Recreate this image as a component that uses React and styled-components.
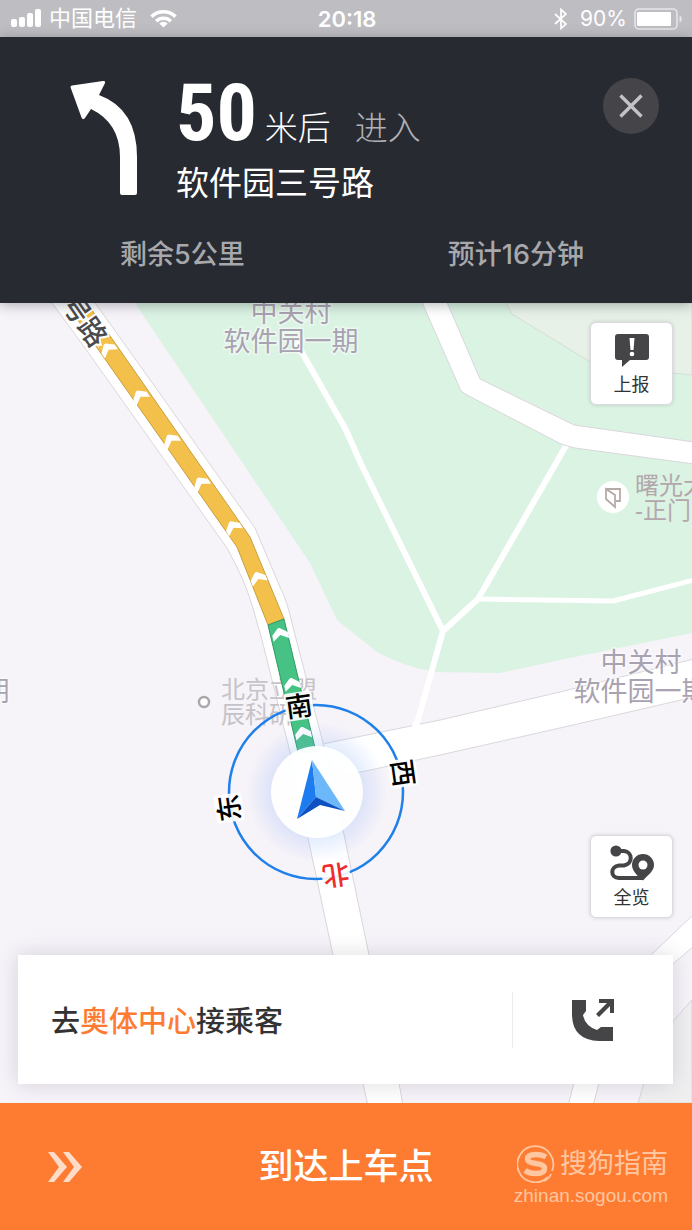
import React from 'react';
import styled, { createGlobalStyle } from 'styled-components';

const GlobalStyle = createGlobalStyle`
    * {
        box-sizing: border-box;
    }

    body {
        margin: 0;
        font-family: "Liberation Sans", "Noto Sans CJK SC", sans-serif;
    }

    button {
        border: none;
        padding: 0;
        font-family: inherit;
        cursor: pointer;
    }
`;

const areaLabels = [
    { x: 291, y: 322, text: '中关村' },
    { x: 291, y: 351, text: '软件园一期' },
    { x: 641, y: 672, text: '中关村' },
    { x: 641, y: 701, text: '软件园一期' },
    { x: -58, y: 701, text: '软件园一期' },
];

const chevrons = [
    [108, 349, -35],
    [140, 396, -33],
    [171, 440, -33],
    [201, 483, -33],
    [233, 527, -30],
    [258, 578, -22],
    [280, 634, -14],
    [292, 684, -14],
    [303, 733, -12],
];

const directions = [
    { text: '南', x: 299, y: 706, angle: -8 },
    { text: '西', x: 403, y: 773, angle: 82 },
    { text: '北', x: 336, y: 875, angle: 172, red: true },
    { text: '东', x: 229, y: 808, angle: -98 },
];

const StatusBar = () => (
    <Status>
        <StatusSide>
            <svg width="31" height="19" viewBox="0 0 31 19" fill="#fff">
                <rect x="0" y="10" width="6" height="8" rx="2" />
                <rect x="8" y="8" width="6" height="10" rx="2" />
                <rect x="16" y="4" width="6" height="14" rx="2" />
                <rect x="24" y="0" width="6" height="18" rx="2" />
            </svg>
            <Carrier>中国电信</Carrier>
            <svg width="27" height="19" viewBox="0 0 27 19" fill="none" stroke="#fff" strokeWidth="3.6">
                <path d="M1.5 7.6a17.2 17.2 0 0 1 24 0" />
                <path d="M6.2 12.2a10.5 10.5 0 0 1 14.6 0" />
                <path d="M13.5 18.5l-4.2-4.1a6 6 0 0 1 8.4 0z" fill="#fff" stroke="none" />
            </svg>
        </StatusSide>
        <Clock>20:18</Clock>
        <StatusSide $end>
            <svg width="14" height="22" viewBox="0 0 14 22" fill="none" stroke="#fff" strokeWidth="1.7">
                <path d="M1 6l11 10-5 4.5v-19L12 6 1 16" />
            </svg>
            <Percent>90%</Percent>
            <svg width="49" height="22" viewBox="0 0 49 22">
                <rect x="1" y="1" width="42" height="20" rx="4" fill="none" stroke="#e6e5e8" strokeWidth="1.6" />
                <rect x="3" y="4" width="34" height="14" rx="1" fill="#fff" />
                <path d="M45.5 7.5c3 1 3 6 0 7z" fill="#e6e5e8" />
            </svg>
        </StatusSide>
    </Status>
)

const GuidePanel = () => (
    <Guide>
        <Turn>
            <TurnIcon viewBox="0 0 70 118" aria-hidden="true">
                <path d="M2 4.5L33 0q3-.2 1.8 2.6L29 14Q67 28 67 76v36q0 2-2 2H52q-2 0-2-2V76Q50 42 21 28l-6 9q-2 2.5-3.5-.5L.8 7Q0 5 2 4.5z" fill="#fff" />
            </TurnIcon>
            <TurnText>
                <Distance>
                    <strong>50</strong>
                    <span>米后</span>
                    <em>进入</em>
                </Distance>
                <Road>软件园三号路</Road>
            </TurnText>
            <Close aria-label="关闭">
                <svg width="24" height="24" viewBox="0 0 24 24" stroke="#c3c3c6" strokeWidth="3.4">
                    <path d="M1.5 1.5l21 21M22.5 1.5l-21 21" />
                </svg>
            </Close>
        </Turn>
        <Trip>
            <span>剩余5公里</span>
            <span>预计16分钟</span>
        </Trip>
    </Guide>
)

const RoadMap = () => (
    <MapSvg viewBox="0 303 692 800" preserveAspectRatio="xMidYMid slice">
        <defs>
            <radialGradient id="halo">
                <stop offset="0.6" stopColor="#7fa8f5" stopOpacity="0.24" />
                <stop offset="1" stopColor="#7fa8f5" stopOpacity="0" />
            </radialGradient>
        </defs>
        <rect x="-700" y="-300" width="2100" height="2000" fill="#f6f3f9" />

        {/* parks and blocks */}
        <path d="M135 303L153 330 310 563 337 620 377 652Q400 665 434 672L500 673 560 660 692 633V303z" fill="#daf3e3" />
        <path d="M506 303l6 11 80 49 80 10 20 2v-72z" fill="#e7f1e8" stroke="#d6ddd6" />
        <path d="M692 1000l-18 20-19 35-11 28-6 20h54z" fill="#efeff0" stroke="#d8d6db" />

        {/* footpaths */}
        <g fill="none" stroke="#fff" strokeWidth="6" strokeLinejoin="round">
            <path d="M296 342L346 430 361 464 443 631" />
            <path d="M567 444L478 599 443 631 416 727" />
            <path d="M478 599L613 601 694 580" strokeWidth="5" />
        </g>

        {/* streets */}
        <g fill="#fff" stroke="#d9d7dc">
            <path d="M421 300L461 391 467 395 561 444 575 448 694 464V442L574 425 480 379 446 300z" />
            <path d="M694 914L651 955 604 1010 574 1083 568 1106H593L599 1083 634 1005 674 963 694 946z" />
            <path d="M318 745L440 720 560 692 694 659V697L560 728 440 755 356 773z" />
            <path d="M50 300L90 355 227 548Q245 580 253 608L262 640 290 752 308 838 333 955 363 1083 368 1106H403L399 1083 369 955 343 830 323 743 293 627Q287 600 280 587L255 528 163 398 93 300z" />
        </g>
        <path d="M326 746l60-13 0 33-40 8-14-10zM413 722l7-1 0 6-8 0z" fill="#fff" />

        {/* place names under the route */}
        <g fill="#c6c3c8" fontSize="24">
            <text x="221" y="698">北京立盟</text>
            <text x="221" y="723">辰科研</text>
        </g>
        <circle cx="204" cy="702" r="5" fill="#fff" stroke="#aaa7ac" strokeWidth="2.5" />

        {/* route */}
        <path d="M64 300L100 352 237 547 268 625 284 619 250 537 115 343 85 300z" fill="#f3c14b" stroke="#c79e42" />
        <path d="M268 625L298 752H316L284 619z" fill="#45c284" stroke="#329a65" />
        {chevrons.map(([x, y, angle]) => (
            <path
                key={y}
                d="M-8 6V0L-1-6H1L8 0V6L0 1z"
                transform={`translate(${x} ${y}) rotate(${angle})`}
                fill="#fff"
            />
        ))}

        <StreetName transform="translate(70 300) rotate(55)" x="-31" y="10">三号路</StreetName>

        {areaLabels.map((label) => (
            <AreaName key={`${label.x}-${label.y}`} x={label.x} y={label.y}>{label.text}</AreaName>
        ))}

        {/* gate */}
        <circle cx="613" cy="497" r="16" fill="#fff" />
        <path d="M606 489h14v12h-4M606 489v10l9 8v-12z" fill="none" stroke="#b5aaa6" strokeWidth="1.8" />
        <g fill="#b3a7ad" fontSize="24">
            <text x="635" y="494">曙光大厦</text>
            <text x="635" y="519">-正门</text>
        </g>

        {/* compass */}
        <circle cx="317" cy="792" r="70" fill="url(#halo)" />
        <circle cx="316" cy="792" r="87" fill="none" stroke="#2080ea" strokeWidth="2.5" />
        <circle cx="317" cy="792" r="46" fill="#fff" fillOpacity="0.96" />
        <path d="M312 760L297 819 316 797z" fill="#1c7cf0" />
        <path d="M312 760L316 797 345 811z" fill="#6cb8fa" />
        <path d="M316 797L297 819 320 805 345 811z" fill="#0c50c2" />
        {directions.map((dir) => (
            <g key={dir.text} transform={`translate(${dir.x} ${dir.y}) rotate(${dir.angle})`}>
                <rect x="-14" y="-14" width="28" height="28" rx="3" fill="#fff" fillOpacity="0.9" />
                <DirectionName y="10" $red={dir.red}>{dir.text}</DirectionName>
            </g>
        ))}
    </MapSvg>
)

const App = () => {
    return (
        <Page>
            <GlobalStyle />
            <StatusBar />
            <GuidePanel />
            <MapArea>
                <RoadMap />
                <MapTools>
                    <MapButton>
                        <svg width="34" height="34" viewBox="0 0 34 34">
                            <path d="M3 0h28q3 0 3 3v20q0 3-3 3H15l-8 7v-7H3q-3 0-3-3V3q0-3 3-3z" fill="#454547" />
                            <path d="M14.5 4h5l-1 12h-3z" fill="#fff" />
                            <circle cx="17" cy="20" r="2.3" fill="#fff" />
                        </svg>
                        上报
                    </MapButton>
                    <MapButton>
                        <svg width="44" height="36" viewBox="0 0 44 36">
                            <circle cx="6" cy="6" r="5.6" fill="#454547" />
                            <path d="M6 6h8c9 1 9 13 0 14.5H9c-9 1-9 12 0 12.5h24" fill="none" stroke="#454547" strokeWidth="4" />
                            <path d="M33 9a11 11 0 0 1 11 11c0 6-6 10-11 15.500-5-4-11-9.500-11-15.500a11 11 0 0 1 11-11z" fill="#454547" />
                            <circle cx="33" cy="20" r="4.5" fill="#fff" />
                        </svg>
                        全览
                    </MapButton>
                </MapTools>
                <TaskCard>
                    <p>去<b>奥体中心</b>接乘客</p>
                    <Call aria-label="拨打电话">
                        <svg width="42" height="42" viewBox="0 0 42 42" fill="#454547">
                            <path d="M0 1h14v11l-3 4q2 11 14 15l4-3h12v14H27Q0 41 0 15z" />
                            <path d="M27 0h15v14h-4V7L27 18l-3-3L35 4h-8z" />
                        </svg>
                    </Call>
                </TaskCard>
            </MapArea>
            <Arrive>
                <svg width="34" height="30" viewBox="0 0 34 30" fill="#ffdcc8">
                    <path d="M0 0h6l13 15L6 30H0l11-15zM15 0h6l13 15-13 15h-6l11-15z" />
                </svg>
                <ArriveTitle>到达上车点</ArriveTitle>
                <Brand>
                    <BrandName>
                        <svg width="38" height="38" viewBox="0 0 38 38" fill="none" stroke="#ffc6a0">
                            <path d="M31 32a18 18 0 1 1 4-6" strokeWidth="1.8" />
                            <path d="M27 36q5-2 7-7" strokeWidth="1.8" />
                            <path d="M29 12q-4-2.5-10-2.5-8.500 0-8.500 4.500 0 3.500 8.500 4.500t8.500 5q0 5-8.500 5-7 0-11-3" strokeWidth="5.5" />
                        </svg>
                        搜狗指南
                    </BrandName>
                    <small>zhinan.sogou.com</small>
                </Brand>
            </Arrive>
        </Page>
    )
}

const Page = styled.div`
    display: flex;
    flex-direction: column;
    min-height: 100vh;
`;

const Status = styled.header`
    display: grid;
    grid-template-columns: 1fr auto 1fr;
    align-items: center;
    height: 37px;
    padding: 0 9px 0 11px;
    background-color: #bebdc2;
    color: #fff;
`;

const StatusSide = styled.div`
    display: flex;
    align-items: center;
    justify-content: ${(props) => (props.$end ? 'flex-end' : 'flex-start')};
    gap: 7px;
`;

const Carrier = styled.span`
    margin-right: 6px;
    font-size: 22px;
    line-height: 36px;
`;

const Clock = styled.time`
    font-family: Inter, sans-serif;
    font-size: 22px;
    font-weight: 600;
`;

const Percent = styled.span`
    margin-left: 5px;
    font-family: Inter, sans-serif;
    font-size: 21px;
`;

const Guide = styled.section`
    z-index: 1;
    display: flex;
    flex-direction: column;
    justify-content: space-between;
    height: 266px;
    padding: 41px 33px 28px 70px;
    background-color: #282a32;
    box-shadow: 0 2px 12px rgba(40, 42, 50, 0.35);
    color: #fff;
`;

const Turn = styled.div`
    display: flex;
    align-items: flex-start;
`;

const TurnIcon = styled.svg`
    width: 70px;
    height: 118px;
    margin-top: 3px;
`;

const TurnText = styled.div`
    flex: 1;
    margin-left: 36px;
`;

const Distance = styled.p`
    display: flex;
    align-items: baseline;
    margin: 0;
    font-size: 33px;
    font-weight: 300;
    line-height: 70px;

    strong {
        margin-right: 8px;
        font-family: "Roboto Condensed", Roboto, sans-serif;
        font-size: 80px;
        font-weight: 700;
    }

    em {
        margin-left: 24px;
        color: #b0b1b5;
        font-style: normal;
    }
`;

const Road = styled.p`
    margin: 0;
    font-size: 33px;
    line-height: 40px;
`;

const Close = styled.button`
    display: flex;
    align-items: center;
    justify-content: center;
    width: 56px;
    height: 56px;
    border-radius: 50%;
    background-color: #454448;
`;

const Trip = styled.div`
    display: flex;
    justify-content: space-between;
    padding: 0 75px 0 50px;
    color: #a7a8ac;
    font-family: Inter, "Noto Sans CJK SC", sans-serif;
    font-size: 27px;
    font-weight: 500;
    line-height: 40px;
`;

const MapArea = styled.main`
    position: relative;
    display: flex;
    flex: 1;
    flex-direction: column;
    justify-content: space-between;
    min-height: 800px;
    padding: 19px 19px 19px 18px;
    overflow: hidden;
`;

const MapSvg = styled.svg`
    position: absolute;
    inset: 0;
    width: 100%;
    height: 100%;
`;

const StreetName = styled.text`
    fill: #4b4b4d;
    stroke: #fff;
    stroke-width: 4px;
    paint-order: stroke;
    font-size: 28px;
    font-weight: 500;
`;

const AreaName = styled.text`
    fill: #a9a2b0;
    stroke: rgba(255, 255, 255, 0.5);
    stroke-width: 3px;
    paint-order: stroke;
    font-size: 27px;
    font-weight: 400;
    text-anchor: middle;
`;

const DirectionName = styled.text`
    fill: ${(props) => (props.$red ? '#ee2c2c' : '#000')};
    font-size: 27px;
    font-weight: 500;
    text-anchor: middle;
`;

const MapTools = styled.div`
    position: relative;
    display: flex;
    flex: 1;
    flex-direction: column;
    align-items: flex-end;
    justify-content: space-between;
    margin-bottom: 37px;
`;

const MapButton = styled.button`
    display: flex;
    flex-direction: column;
    align-items: center;
    justify-content: flex-end;
    gap: 4px;
    width: 83px;
    height: 83px;
    padding-bottom: 6px;
    border: 1px solid #dcdade;
    border-radius: 6px;
    background-color: #fff;
    box-shadow: 0 0 4px rgba(0, 0, 0, 0.15);
    color: #333;
    font-size: 18px;
    line-height: 26px;
`;

const TaskCard = styled.section`
    position: relative;
    display: flex;
    align-items: center;
    height: 129px;
    background-color: #fff;
    box-shadow: 0 0 20px rgba(90, 70, 90, 0.2);

    p {
        flex: 1;
        margin: 0;
        padding: 4px 0 0 33px;
        color: #333;
        font-size: 29px;
        font-weight: 500;
        line-height: 40px;
    }

    b {
        color: #fe7c32;
        font-weight: inherit;
    }
`;

const Call = styled.button`
    display: flex;
    align-items: center;
    justify-content: center;
    width: 161px;
    height: 56px;
    border-left: 1px solid #ececec;
    background-color: transparent;
`;

const Arrive = styled.button`
    display: grid;
    grid-template-columns: 1fr auto 1fr;
    align-items: center;
    height: 127px;
    padding: 0 24px;
    background-color: #fe7c32;
    color: #fff;

    > svg {
        margin-left: 24px;
    }
`;

const ArriveTitle = styled.span`
    font-size: 35px;
    font-weight: 500;
    line-height: 48px;
`;

const Brand = styled.span`
    display: flex;
    flex-direction: column;
    align-items: flex-end;
    margin-top: 18px;
    color: #ffc6a0;

    small {
        font-size: 19px;
        line-height: 24px;
    }
`;

const BrandName = styled.span`
    display: flex;
    align-items: center;
    gap: 5px;
    font-size: 27px;
    line-height: 40px;
`;

export default App;
